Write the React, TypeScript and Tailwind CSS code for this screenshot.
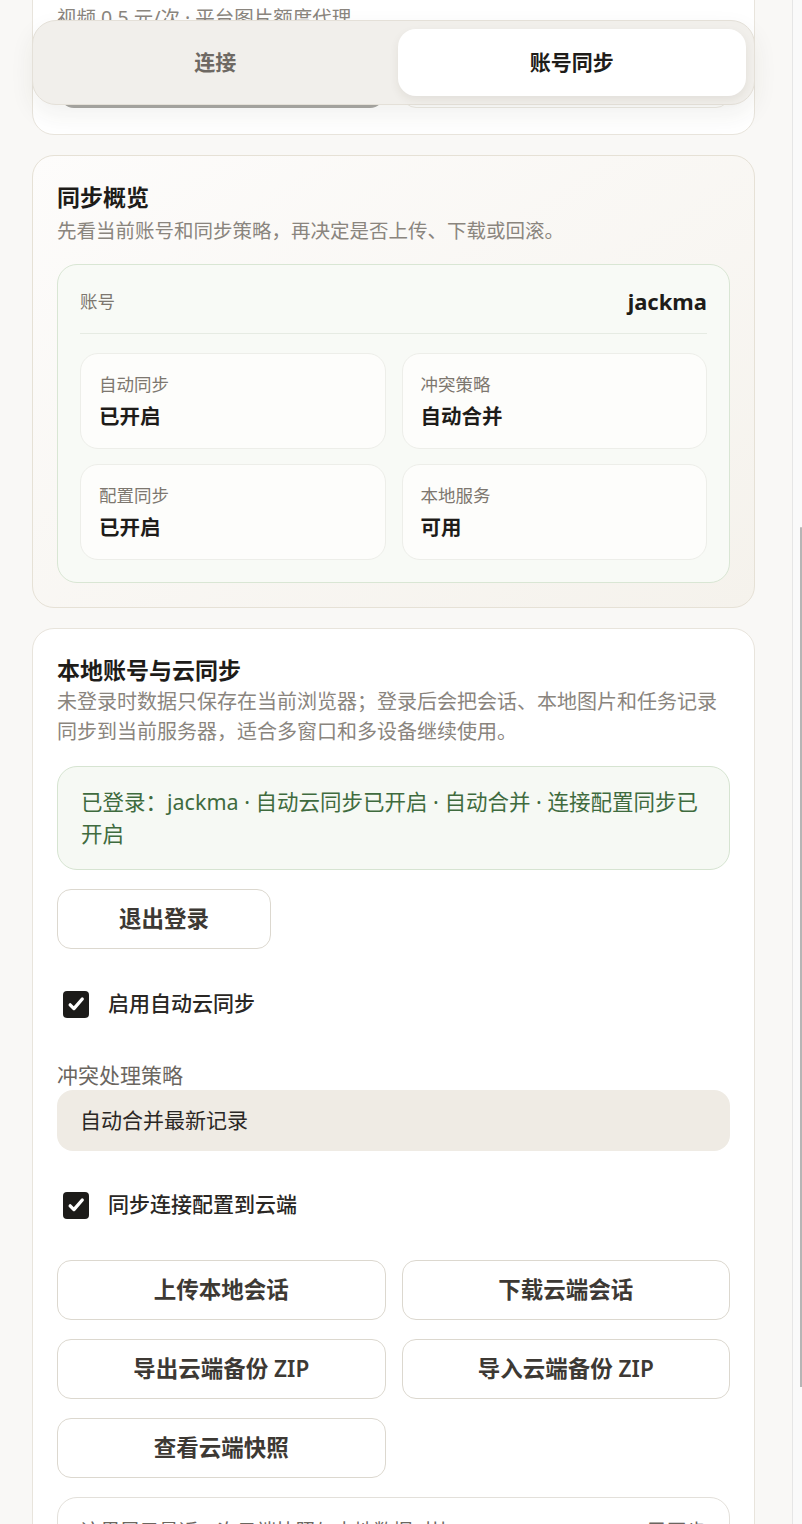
import React from 'react';

const font = { fontFamily: '"Noto Sans", "Noto Sans CJK SC", sans-serif' };

function CheckBox() {
  return (
    <span className="w-[26px] h-[27px] rounded-[4px] bg-[#1c1b19] flex items-center justify-center shrink-0">
      <svg width="20" height="20" viewBox="0 0 24 24" fill="none" stroke="white" strokeWidth="4" strokeLinecap="round" strokeLinejoin="round">
        <path d="M5 13l4.5 4.5L19.5 6" />
      </svg>
    </span>
  );
}

function Stat({ label, value }: { label: string; value: string }) {
  return (
    <div className="h-[96px] rounded-[18px] border border-[#edeee9] bg-[#fdfdfb] px-[18px] pt-[18px]">
      <p className="text-[17.5px] leading-[24px] text-[#7d776f]">{label}</p>
      <p className="mt-1 text-[20.5px] leading-[32px] font-semibold text-[#1e1c19]">{value}</p>
    </div>
  );
}

function OutlineButton({ children, className = '' }: { children: React.ReactNode; className?: string }) {
  return (
    <button className={`h-[60px] rounded-[14px] border border-[#dcd8cf] bg-white text-[22.5px] font-semibold text-[#3d3934] ${className}`}>
      {children}
    </button>
  );
}

export default function App() {
  const actions = ['上传本地会话', '下载云端会话', '导出云端备份 ZIP', '导入云端备份 ZIP', '查看云端快照'];

  return (
    <div className="h-[1524px] overflow-hidden flex bg-[#f9f8f6]" style={font}>
      <div className="flex-1 relative">
        {/* sticky tabs over content */}
        <div className="absolute top-[20px] left-8 w-[723px] z-10 rounded-[24px] border border-[#e4e0d8] bg-[#f1efeb] p-2 pt-[8px] grid grid-cols-2 gap-2 shadow-[0_10px_24px_rgba(60,50,30,0.07)]">
          <button className="h-[67px] rounded-[18px] text-[21px] font-semibold text-[#6e6963]">连接</button>
          <button className="h-[67px] rounded-[18px] bg-white text-[21px] font-semibold text-[#1e1c19] shadow-[0_4px_10px_rgba(60,50,30,0.08)]">账号同步</button>
        </div>

        <div className="ml-8 w-[723px] flex flex-col gap-5">
          {/* previous card, mostly scrolled away */}
          <div className="-mt-[52px] rounded-[22px] border border-[#e8e4dc] bg-white px-6 pt-6 pb-[26px]">
            <p className="text-[19.5px] leading-[30px] text-[#8a857e]">图片 0.2 元/张 · 平台文本额度代理</p>
            <p className="text-[19.5px] leading-[30px] text-[#8a857e]">视频 0.5 元/次 · 平台图片额度代理</p>
            <div className="mt-[15px] grid grid-cols-2 gap-4">
              <div className="h-[60px] ml-[3px] mr-[2px] rounded-[14px] bg-[#a9a8a5]" />
              <div className="h-[60px] rounded-[14px] border border-[#eeebe5] bg-white" />
            </div>
          </div>

          {/* overview */}
          <div className="rounded-[22px] border border-[#e6e1d6] bg-gradient-to-br from-[#fdfcfb] to-[#f5f2ec] px-6 pt-6 pb-6">
            <h2 className="text-[23px] leading-[34px] font-bold text-[#1e1c19]">同步概览</h2>
            <p className="mt-0.5 text-[19.5px] leading-[30px] text-[#8a857e]">先看当前账号和同步策略，再决定是否上传、下载或回滚。</p>
            <div className="mt-[18px] rounded-[20px] border border-[#d9e6d4] bg-[#f8faf6] p-[22px]">
              <div className="flex items-center justify-between pb-[18px] border-b border-[#e6ebe3]">
                <span className="text-[17.5px] leading-[28px] text-[#7d776f]">账号</span>
                <span className="text-[22px] leading-[28px] font-bold text-[#1e1c19]">jackma</span>
              </div>
              <div className="mt-[19px] grid grid-cols-2 gap-x-4 gap-y-[15px]">
                <Stat label="自动同步" value="已开启" />
                <Stat label="冲突策略" value="自动合并" />
                <Stat label="配置同步" value="已开启" />
                <Stat label="本地服务" value="可用" />
              </div>
            </div>
          </div>

          {/* local account & cloud sync */}
          <div className="rounded-[22px] border border-[#e8e4dc] bg-white px-6 pt-6 pb-6">
            <h2 className="text-[23px] leading-[34px] font-bold text-[#1e1c19]">本地账号与云同步</h2>
            <p className="text-[20px] leading-[30px] text-[#8a857e]">
              未登录时数据只保存在当前浏览器；登录后会把会话、本地图片和任务记录同步到当前服务器，适合多窗口和多设备继续使用。
            </p>
            <div className="mt-[19px] rounded-[20px] border border-[#d6e4d1] bg-[#f6f9f4] px-[23px] py-[19px] text-[21.5px] leading-[32px] text-[#3f6b3e]">
              已登录：jackma · 自动云同步已开启 · 自动合并 · 连接配置同步已开启
            </div>

            <OutlineButton className="mt-[19px] w-[214px] block">退出登录</OutlineButton>

            <label className="mt-[38px] flex items-center h-[34px] pl-[6px] gap-[19px]">
              <CheckBox />
              <span className="text-[21px] font-medium text-[#2a2724]">启用自动云同步</span>
            </label>

            <p className="mt-[39px] text-[21px] leading-[30px] text-[#6b665f]">冲突处理策略</p>
            <div className="h-[61px] rounded-[16px] bg-[#efebe4] px-[23px] flex items-center text-[21px] text-[#2a2724]">
              自动合并最新记录
            </div>

            <label className="mt-[37px] flex items-center h-[34px] pl-[6px] gap-[19px]">
              <CheckBox />
              <span className="text-[21px] font-medium text-[#2a2724]">同步连接配置到云端</span>
            </label>

            <div className="mt-[38px] grid grid-cols-2 gap-x-4 gap-y-[19px]">
              {actions.map((a) => (
                <OutlineButton key={a}>{a}</OutlineButton>
              ))}
            </div>

            <div className="mt-[19px] rounded-[20px] border border-[#e3e0da] bg-white px-[23px] pt-[18px] pb-6 flex justify-between text-[19.5px] leading-[30px] text-[#6b665f]">
              <span>这里展示最近一次云端快照与本地数据对比</span>
              <span>已同步</span>
            </div>
          </div>
        </div>
      </div>

      {/* scrollbar strip */}
      <div className="w-[10px] border-l border-[#e6e6e6] bg-[#fafafa] flex justify-end">
        <div className="mt-[527px] w-[2px] h-[860px] rounded-t-full bg-[#b5b5b5]" />
      </div>
    </div>
  );
}
